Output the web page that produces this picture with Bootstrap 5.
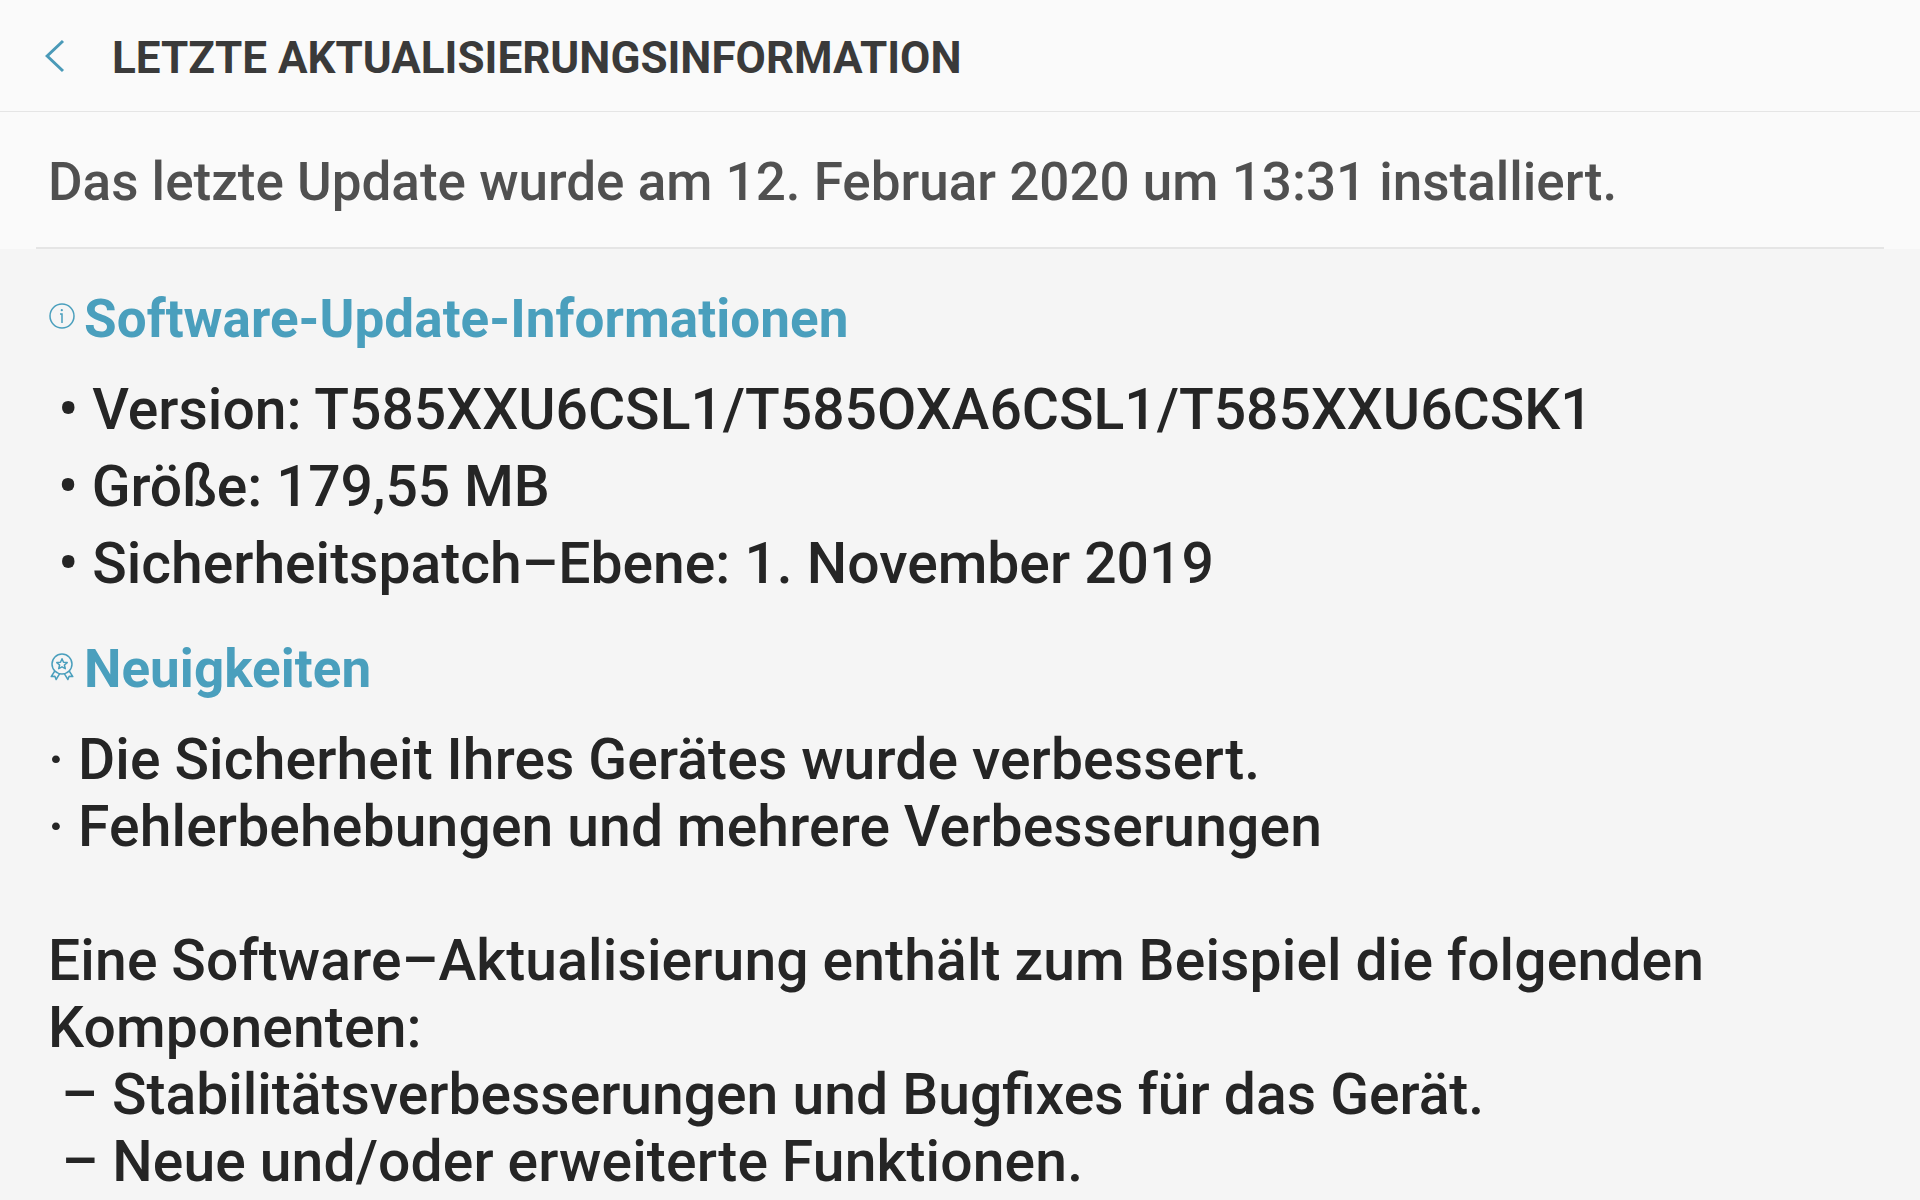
<!DOCTYPE html>
<html lang="de">
<head>
  <meta charset="UTF-8">
  <meta name="viewport" content="width=device-width, initial-scale=1.0">
  <title>Letzte Aktualisierungsinformation</title>
  <link href="https://cdn.jsdelivr.net/npm/bootstrap@5.3.0/dist/css/bootstrap.min.css" rel="stylesheet">
  <style>
    body {
      height: 1200px;
      background: #f5f5f5;
      color: #252525;
      font-family: Roboto, "Liberation Sans", sans-serif;
      font-weight: 500;
    }
    .topbar {
      height: 112px;
      background: #fafafa;
      border-bottom: 1px solid #e5e5e5;
      padding: 4px 0 0 45px;
    }
    .topbar svg { margin-bottom: 3px; }
    .topbar h1 {
      font-size: 44px;
      line-height: 54px;
      font-weight: 700;
      color: #3a3a3a;
      margin-left: 47px;
    }
    .installed {
      height: 137px;
      background: #fafafa;
      padding: 34px 36px 0;
    }
    .installed p {
      height: 103px;
      padding-left: 12px;
      border-bottom: 2px solid #e5e5e5;
      font-size: 53px;
      line-height: 72px;
      color: #505050;
    }
    .info { padding: 35px 48px 0; }
    .info h2 {
      font-size: 53px;
      line-height: 70px;
      font-weight: 700;
      letter-spacing: .04px;
      color: #4a9fbd;
    }
    .info h2 svg { margin: 18px 9px 0 0; }
    .facts { margin: 17px 0 32px -4px; }
    .facts li { font-size: 57px; line-height: 77px; white-space: pre; }
    .facts .size { letter-spacing: -.15px; }
    .notes {
      margin-top: 22px;
      font-size: 57px;
      line-height: 67px;
      letter-spacing: .15px;
      word-spacing: -.6px;
      white-space: pre-wrap;
    }
    /* letter-spacing would break the fi ligature */
    .notes .ligature { letter-spacing: 0; word-spacing: 0; margin-left: -1px; }
  </style>
</head>
<body class="overflow-hidden">
<header class="topbar d-flex align-items-center">
  <a href="#" class="d-flex" aria-label="Zurück">
    <svg width="20" height="34" viewBox="0 0 20 34" fill="none" stroke="#4a9ab8" stroke-width="3"><path d="M18 2 2.2 17 18 32"/></svg>
  </a>
  <h1 class="mb-0 text-uppercase">Letzte Aktualisierungsinformation</h1>
</header>
<section class="installed">
  <p class="mb-0"><span>Das letzte Update wurde am 12. Februar 2020 um 13:31 installiert.</span></p>
</section>
<main class="info">
  <h2 class="d-flex align-items-start mb-0">
    <svg width="27" height="28" viewBox="0 0 27 28" fill="none" stroke="#4a9fbd" stroke-width="1.5"><circle cx="14" cy="14" r="12"/><path d="M12 12h2v9"/><circle cx="13.8" cy="8.2" r="1.1" fill="#4a9fbd" stroke="none"/></svg>
    <span>Software-Update-Informationen</span>
  </h2>
  <ul class="facts list-unstyled">
    <li> • Version: T585XXU6CSL1/T585OXA6CSL1/T585XXU6CSK1</li>
    <li class="size"> • Größe: 179,55 MB</li>
    <li> • Sicherheitspatch–Ebene: 1. November 2019</li>
  </ul>
  <h2 class="d-flex align-items-start mb-0">
    <svg width="27" height="30" viewBox="0 0 27 30" fill="none" stroke="#4a9fbd" stroke-width="1.5" stroke-linejoin="round"><circle cx="14" cy="12" r="10"/><path d="m14 6.8 1.5 3.4 3.7.4-2.8 2.4.9 3.7-3.3-1.9-3.3 1.9.9-3.7-2.8-2.4 3.7-.4z"/><path d="m6.8 19-3.6 5.6 3.7-.3 1.2 3.2 3.6-5.8M21.2 19l3.6 5.6-3.7-.3-1.2 3.2-3.6-5.8"/></svg>
    <span>Neuigkeiten</span>
  </h2>
  <div class="notes">· Die Sicherheit Ihres Gerätes wurde verbessert.
· Fehlerbehebungen und mehrere Verbesserungen

Eine Software–Aktualisierung enthält zum Beispiel die folgenden Komponenten:
<span class="ligature"> – Stabilitätsverbesserungen und Bugfixes für das Gerät.</span>
 – Neue und/oder erweiterte Funktionen.</div>
</main>
<script src="https://cdn.jsdelivr.net/npm/bootstrap@5.3.0/dist/js/bootstrap.bundle.min.js"></script>
</body>
</html>
